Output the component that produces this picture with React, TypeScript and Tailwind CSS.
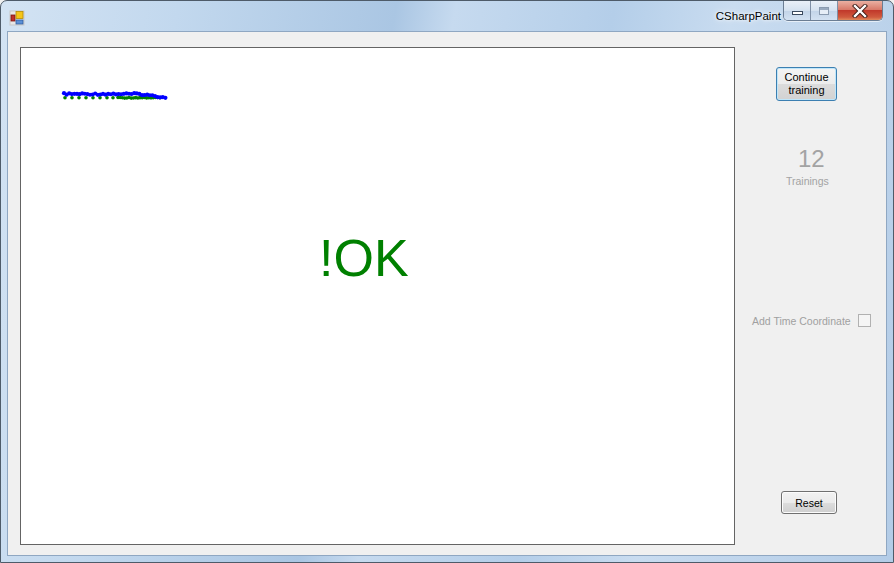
import React from "react";

// deterministic jitter so the scribble looks hand drawn but stays stable
function jitter(i: number) {
  const s = Math.sin(i * 12.9898) * 43758.5453;
  return s - Math.floor(s);
}

const blueDots = Array.from({ length: 40 }, (_, i) => {
  const x = 43 + i * 2.6;
  const base = x > 118 ? 46 + (x - 118) * 0.13 : 46;
  return { x, y: base + (jitter(i) - 0.5) * 1.6 };
});

const greenDots = [
  ...[44, 51, 58, 65, 72, 79, 86, 92].map((x) => ({ x, y: 49.8 })),
  ...Array.from({ length: 20 }, (_, i) => ({ x: 97 + i * 2.2, y: 49.3 + jitter(i + 7) * 0.8 })),
];

function AppIcon() {
  return (
    <svg width="16" height="16" viewBox="0 0 16 16">
      <rect x="1" y="1" width="14" height="14" fill="#e8e8e8" stroke="#c8c8c8" />
      <rect x="2" y="5" width="4" height="6" fill="#c0302a" stroke="#7a1510" strokeWidth="0.8" />
      <rect x="7" y="1.5" width="7" height="7" fill="#f5c518" stroke="#b38a00" strokeWidth="0.8" />
      <rect x="7" y="10" width="7" height="4" fill="#5b8fd6" stroke="#2f5c9e" strokeWidth="0.8" />
    </svg>
  );
}

function CaptionButtons() {
  return (
    <div className="flex h-[20px] rounded-b-[5px] border border-t-0 border-[#6b7d93] overflow-hidden shadow-[0_1px_0_rgba(255,255,255,0.6)]">
      <div className="w-[27px] h-full flex items-center justify-center bg-[linear-gradient(#e9f0f8,#d5e2f0_50%,#c2d4e8_51%,#d3e2f2)] border-r border-[#7f90a6]">
        <div className="w-[11px] h-[4px] bg-white border border-[#3b4a5e] mt-[5px]" />
      </div>
      <div className="w-[27px] h-full flex items-center justify-center bg-[linear-gradient(#e9f0f8,#d5e2f0_50%,#c2d4e8_51%,#d3e2f2)] border-r border-[#7f90a6]">
        <div className="w-[10px] h-[8px] border border-[#8a9bb0] bg-[#e6eef7] flex items-start">
          <div className="w-full h-[2px] bg-[#9aabc0]" />
        </div>
      </div>
      <div className="w-[44px] h-full flex items-center justify-center bg-[linear-gradient(#eab0a2,#d87a6a_45%,#c1392b_50%,#d05a3e_85%,#e08a5c)]">
        <svg width="16" height="14" viewBox="0 0 16 14">
          <path d="M3 2 L13 12 M13 2 L3 12" stroke="#3a1a14" strokeWidth="4.2" strokeLinecap="square" />
          <path d="M3 2 L13 12 M13 2 L3 12" stroke="#ffffff" strokeWidth="2.4" strokeLinecap="square" />
        </svg>
      </div>
    </div>
  );
}

export default function App() {
  return (
    <div className="w-[894px] h-[563px] overflow-hidden bg-[#f0f0f0]">
      <div className="w-[894px] h-[563px] flex flex-col border border-[#4e5b69] rounded-t-[7px] bg-[linear-gradient(100deg,#d3e3f3_0%,#c2d8ee_18%,#aac6e3_40%,#c6daef_46%,#b4cee9_62%,#c9dcf0_74%,#b3cce7_100%)] font-['Liberation_Sans',Arial,sans-serif]">
        {/* title bar */}
        <div className="h-[30px] flex items-start">
          <div className="ml-[8px] mt-[9px]">
            <AppIcon />
          </div>
          <div className="flex-1 text-right pt-[8px] pr-[2px] text-[11.5px] leading-[14px] text-black [text-shadow:0_0_6px_#ffffff,0_0_3px_#ffffff]">
            CSharpPaint
          </div>
          <div className="mr-[10px]">
            <CaptionButtons />
          </div>
        </div>

        {/* client area */}
        <div className="mx-[6px] h-[525px] border border-[#8fa7c2] bg-[#f0f0f0] flex">
          <div className="pl-[12px] pt-[15px]">
            <div className="relative w-[715px] h-[498px] bg-white border border-[#646464]">
              <svg className="absolute left-0 top-0" width="200" height="70">
                {greenDots.map((d, i) => (
                  <circle key={"g" + i} cx={d.x} cy={d.y} r="1.8" fill="#008000" />
                ))}
                {blueDots.map((d, i) => (
                  <circle key={"b" + i} cx={d.x} cy={d.y} r="2.1" fill="#0000ff" />
                ))}
              </svg>
              <div className="absolute left-[298px] top-[184px] text-[52px] leading-[52px] text-[#008000]">
                !OK
              </div>
            </div>
          </div>

          <div className="flex-1 flex flex-col items-start text-[10.5px] leading-[12px]">
            <button className="mt-[35px] ml-[41px] w-[61px] h-[34px] rounded-[3px] border border-[#3c7fb1] bg-[linear-gradient(#f4f4f4,#ececec_50%,#dcdcdc_51%,#d2d2d2)] shadow-[inset_0_0_0_1px_#bfe6fa] text-black text-[11px] leading-[13px] flex flex-col items-center justify-center">
              <span>Continue</span>
              <span>training</span>
            </button>

            <div className="mt-[46px] ml-[63px] text-[24px] leading-[24px] text-[#a3a3a3]">12</div>
            <div className="mt-[4px] ml-[51px] text-[#a3a3a3]">Trainings</div>

            <div className="mt-[127px] ml-[17px] w-[119px] h-[13px] flex items-center justify-between">
              <span className="text-[#a0a0a0]">Add Time Coordinate</span>
              <span className="w-[13px] h-[13px] border border-[#b1b1b1] bg-[#f5f5f5]" />
            </div>

            <button className="mt-[164px] ml-[46px] w-[56px] h-[23px] rounded-[3px] border border-[#707070] bg-[linear-gradient(#f2f2f2,#ebebeb_50%,#dddddd_51%,#cfcfcf)] shadow-[inset_0_0_0_1px_#fcfcfc] text-black flex items-center justify-center">
              Reset
            </button>
          </div>
        </div>
      </div>
    </div>
  );
}
